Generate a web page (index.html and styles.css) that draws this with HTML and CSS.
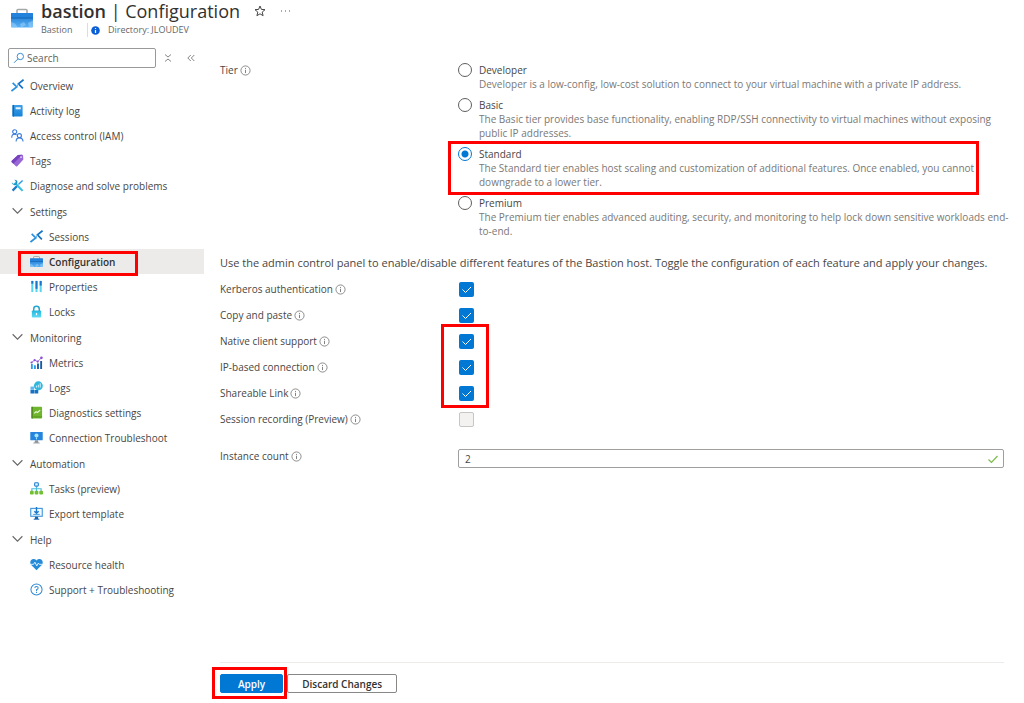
FILE: index.html
```html
<!DOCTYPE html>
<html lang="en">
<head>
<meta charset="utf-8">
<title>bastion | Configuration</title>
<link rel="stylesheet" href="styles.css">
</head>
<body>

<!-- shared icons -->
<svg class="iconDefs" aria-hidden="true">
  <defs>
    <linearGradient id="blueFade" x1="0" y1="0" x2="0" y2="1">
      <stop offset="0" stop-color="#1673cf"/><stop offset="1" stop-color="#5ab2f5"/>
    </linearGradient>
    <linearGradient id="bookFade" x1="0" y1="0" x2="0" y2="1">
      <stop offset="0" stop-color="#3fa0e8"/><stop offset="1" stop-color="#1683d8"/>
    </linearGradient>
    <linearGradient id="lockFade" x1="0" y1="0" x2="0" y2="1">
      <stop offset="0" stop-color="#22b5dd"/><stop offset="1" stop-color="#5fdcf4"/>
    </linearGradient>
  </defs>
  <symbol id="info" viewBox="0 0 12 12">
    <circle cx="6" cy="6" r="5" fill="none" stroke="#777" stroke-width=".9"/>
    <path d="M6 5.2v3.6M6 3.2v1.1" stroke="#777" stroke-width="1"/>
  </symbol>
  <symbol id="chevron" viewBox="0 0 12 12">
    <path d="M1.500 3L6 7.500 10.500 3" fill="none" stroke="#666" stroke-width="1"/>
  </symbol>
  <symbol id="bastion" viewBox="0 0 14 14">
    <path d="M.5 13L6.200 8.600 1.800 4.200" fill="none" stroke="#2a8fdd" stroke-width="1.800"/>
    <path d="M13.500 .8L8 5.200l4.800 4.800" fill="none" stroke="#1572c4" stroke-width="1.800"/>
    <path d="M6.200 8.600L8 5.200" stroke="#3fa9ee" stroke-width="1"/>
  </symbol>
  <symbol id="toolbox" viewBox="0 0 22 20">
    <path d="M6 6V2.500q0-1 1-1h8q1 0 1 1V6" fill="none" stroke="#a5a8ab" stroke-width="1.600"/>
    <rect x="0" y="5" width="22" height="14.500" rx="1" fill="url(#blueFade)"/>
    <rect x="0" y="5" width="22" height="4.500" rx="1" fill="#2383dc"/>
    <path d="M0 9.500h22v1H0z" fill="#1262b3"/>
    <path d="M0 14l4 1.500 3 4H1q-1 0-1-1zM22 12.500l-5 2.500 1 4.500h3q1 0 1-1zM9 16l4-2 2 3-5 2.500z" fill="#a4d5fa" opacity=".5"/>
  </symbol>
</svg>

<header class="pageHeader">
  <svg class="resourceIcon"><use href="#toolbox"/></svg>
  <div>
    <div class="titleRow">
      <h1 class="pageTitle"><strong>bastion</strong> | Configuration</h1>
      <button type="button" class="plainButton starButton" aria-label="Favorite">
        <svg class="icon12" viewBox="0 0 12 12"><path d="M6 1l1.400 3.400 3.600.3-2.800 2.400.9 3.600L6 8.800l-3.100 1.900.9-3.600L1 4.700l3.600-.3z" fill="none" stroke="#444" stroke-width="1"/></svg>
      </button>
      <button type="button" class="plainButton moreButton" aria-label="More">
        <svg class="icon12" viewBox="0 0 12 12"><path d="M2 6h1M6 6h1M10 6h1" stroke="#555" stroke-width="1"/></svg>
      </button>
    </div>
    <div class="subRow">
      <span class="resourceType">Bastion</span>
      <svg class="icon9" viewBox="0 0 9 9"><circle cx="4.500" cy="4.500" r="4.300" fill="#0a5fd8"/><path d="M4.500 4v3M4.500 1.900v1.200" stroke="#fff" stroke-width="1.200"/></svg>
      <span>Directory: JLOUDEV</span>
    </div>
  </div>
</header>

<div class="blade">
  <nav class="sideNav">
    <div class="searchRow">
      <label class="searchBox">
        <svg class="icon12" viewBox="0 0 12 12"><circle cx="7.300" cy="4.500" r="3.200" fill="none" stroke="#3a8fd6" stroke-width="1"/><path d="M5 6.800L1 10.800" stroke="#3a8fd6" stroke-width="1"/></svg>
        <input type="text" class="searchInput" placeholder="Search" aria-label="Search">
      </label>
      <button type="button" class="plainButton" aria-label="Collapse all">
        <svg class="icon10" viewBox="0 0 10 10"><path d="M2 1.500l3 2.500 3-2.500M2 8.500L5 6l3 2.500" fill="none" stroke="#777" stroke-width=".9"/></svg>
      </button>
      <button type="button" class="plainButton collapseButton" aria-label="Hide menu">
        <svg class="icon10" viewBox="0 0 10 10"><path d="M4.800 2l-3 3 3 3M8.300 2l-3 3 3 3" fill="none" stroke="#777" stroke-width=".9"/></svg>
      </button>
    </div>

    <ul class="navList">
      <li><a href="#" class="navItem"><svg class="navIcon"><use href="#bastion"/></svg>Overview</a></li>
      <li><a href="#" class="navItem">
        <svg class="navIcon" viewBox="0 0 14 14"><rect x="1.500" y="1" width="11" height="12.500" rx="1" fill="url(#bookFade)"/><path d="M2.500 1v12.500" stroke="#1069b4" stroke-width="1.600"/><rect x="5" y="3.500" width="5.500" height="2.200" fill="#e8f5ff"/></svg>Activity log</a></li>
      <li><a href="#" class="navItem">
        <svg class="navIcon" viewBox="0 0 14 14" fill="none" stroke="#3b7ddd" stroke-width="1.200"><circle cx="4" cy="3" r="2.200"/><path d="M.8 9.500C.8 6.500 2 5.500 4 5.500q1.300 0 2 .7"/><circle cx="9" cy="7.200" r="2.200"/><path d="M5.500 13.500c0-2.700 1.300-4 3.500-4s3.800 1.300 4 4"/></svg>Access control (IAM)</a></li>
      <li><a href="#" class="navItem">
        <svg class="navIcon" viewBox="0 0 14 14"><path d="M7.500 1.200L12 .8q1 0 1 1l.3 4-6.600 7.400q-.7.700-1.400 0L.8 8.800q-.7-.7 0-1.400z" fill="#9a67d6"/><path d="M7.500 1.200L12 .8 2.500 10.500.8 8.800q-.7-.7 0-1.400z" fill="#7742bd"/><circle cx="10.800" cy="3.300" r="1" fill="#e9ddf8"/></svg>Tags</a></li>
      <li><a href="#" class="navItem">
        <svg class="navIcon" viewBox="0 0 14 14"><path d="M12.500 1.500L8 6" stroke="#2a9be0" stroke-width="1.500"/><path d="M6.500 7.500l-4.800 5" stroke="#1a7bc8" stroke-width="2.400"/><path d="M4 4l8.500 8.800" stroke="#32bede" stroke-width="2.200"/><path d="M.8 3.500L2.500 5l2.400-.1.200-2.400L3.600.9q2.800-.3 3.300 1.800.3 3.800-3.300 4Q1 6.300.8 3.500z" fill="#1795c9"/></svg>Diagnose and solve problems</a></li>
    </ul>

    <button type="button" class="navItem navHeading"><svg class="navIcon"><use href="#chevron"/></svg>Settings</button>
    <ul class="navList navSub">
      <li><a href="#" class="navItem"><svg class="navIcon"><use href="#bastion"/></svg>Sessions</a></li>
      <li><a href="#" class="navItem navActive" aria-current="page"><svg class="navIcon"><use href="#toolbox"/></svg>Configuration</a></li>
      <li><a href="#" class="navItem">
        <svg class="navIcon" viewBox="0 0 14 14" stroke-width="2.200"><path d="M2.500 1v12" stroke="#58d5f0"/><path d="M2.500 1v3" stroke="#1778c9"/><path d="M7 1v12" stroke="#58d5f0"/><path d="M7 1v8.500" stroke="#1778c9"/><path d="M11.500 1v12" stroke="#58d5f0"/><path d="M11.500 1v5" stroke="#1778c9"/></svg>Properties</a></li>
      <li><a href="#" class="navItem">
        <svg class="navIcon" viewBox="0 0 14 14"><path d="M4 7V4.200Q4 1.300 7 1.300t3 2.900V7" fill="none" stroke="#25a5cb" stroke-width="1.600"/><rect x="2" y="5.800" width="10" height="7.700" rx="1" fill="url(#lockFade)"/><path d="M7 8.500v2.500" stroke="#fff" stroke-width="1.400"/></svg>Locks</a></li>
    </ul>

    <button type="button" class="navItem navHeading"><svg class="navIcon"><use href="#chevron"/></svg>Monitoring</button>
    <ul class="navList navSub">
      <li><a href="#" class="navItem">
        <svg class="navIcon" viewBox="0 0 14 14"><path d="M1 8.500h2V14H1zM4.300 10h2v4h-2z" fill="#2d9bea"/><path d="M7.600 8h2v6h-2zM11 5.500h2V14h-2z" fill="#185a9e"/><path d="M1.500 7l3.500-2.500L8.300 6l4-4" fill="none" stroke="#a06be0" stroke-width="1"/><g fill="#8a4fd4"><circle cx="1.700" cy="7" r="1.200"/><circle cx="5" cy="4.500" r="1.200"/><circle cx="8.300" cy="6" r="1.200"/><circle cx="12.300" cy="2" r="1.400"/></g></svg>Metrics</a></li>
      <li><a href="#" class="navItem">
        <svg class="navIcon" viewBox="0 0 14 14"><path d="M.5 6h4v3.500h-4z" fill="#5fb6f3"/><path d="M.5 9.800h4v3.700h-4zM4.900 9.800h4v3.700h-4z" fill="#1571c2"/><circle cx="9" cy="5.200" r="4.800" fill="#31b6dc"/><path d="M6.900 7V5M9 7V4M11 7V2.500" stroke="#e3f8ff" stroke-width="1"/></svg>Logs</a></li>
      <li><a href="#" class="navItem">
        <svg class="navIcon" viewBox="0 0 14 14"><rect x="1.500" y=".8" width="11.500" height="12.700" rx="1" fill="#70b52e"/><path d="M2.300.8v12.700" stroke="#4c871d" stroke-width="1.500"/><path d="M3.500 11.800H13" stroke="#559420" stroke-width="1"/><path d="M4.500 8l2-1.800 1.500.8 3-2.500" fill="none" stroke="#e8f8d6" stroke-width="1.200"/></svg>Diagnostics settings</a></li>
      <li><a href="#" class="navItem">
        <svg class="navIcon" viewBox="0 0 14 14"><rect x=".3" y="1" width="13.400" height="9" rx=".7" fill="#2584dd"/><path d="M5.500 10h3l.8 3H4.700z" fill="#8c9298"/><path d="M3.500 13h7" stroke="#a5aaae" stroke-width="1"/><circle cx="7" cy="4.800" r="2.200" fill="#a5e5fa"/><path d="M7 7v2" stroke="#a5e5fa" stroke-width="1.200"/></svg>Connection Troubleshoot</a></li>
    </ul>

    <button type="button" class="navItem navHeading"><svg class="navIcon"><use href="#chevron"/></svg>Automation</button>
    <ul class="navList navSub">
      <li><a href="#" class="navItem">
        <svg class="navIcon" viewBox="0 0 14 14"><path d="M7 4.500v6M2 10.500V7.300h10v3.200" fill="none" stroke="#49bedd" stroke-width="1.200"/><rect x="5" y=".8" width="4" height="3.700" rx="1" fill="#e5f4ff" stroke="#2482d0" stroke-width="1.200"/><g fill="#73c032"><rect x="0" y="9.500" width="4" height="4" rx="1"/><rect x="5" y="9.500" width="4" height="4" rx="1"/><rect x="10" y="9.500" width="4" height="4" rx="1"/></g></svg>Tasks (preview)</a></li>
      <li><a href="#" class="navItem">
        <svg class="navIcon" viewBox="0 0 14 14"><rect x=".8" y="1.500" width="12.400" height="8.500" fill="#f3faff" stroke="#4297dc" stroke-width="1.200"/><path d="M7 0v6.500M4.700 4.500L7 6.800l2.300-2.300" fill="none" stroke="#1b79cd" stroke-width="1.500"/><path d="M3.500 8h7" stroke="#4297dc" stroke-width="1"/><path d="M5.500 10.500h3l.5 2.500H5z" fill="#1764ab"/><path d="M4 13.200h6" stroke="#1764ab" stroke-width="1"/></svg>Export template</a></li>
    </ul>

    <button type="button" class="navItem navHeading"><svg class="navIcon"><use href="#chevron"/></svg>Help</button>
    <ul class="navList navSub">
      <li><a href="#" class="navItem">
        <svg class="navIcon" viewBox="0 0 14 14"><path d="M7 13.200L1.300 7.500C-1 4.500 1 1.200 3.800 1.200q2 0 3.200 1.600Q8.200 1.200 10.200 1.200c2.800 0 4.800 3.300 2.500 6.300z" fill="#258bd9"/><path d="M1 6.800h2.800L5.300 4.500l2 4 1.700-3 1 1.300h3" fill="none" stroke="#e5f5ff" stroke-width="1"/></svg>Resource health</a></li>
      <li><a href="#" class="navItem">
        <svg class="navIcon" viewBox="0 0 14 14"><circle cx="7" cy="7" r="6" fill="#fff" stroke="#2f8ad5" stroke-width="1.100"/><path d="M5.200 5.500q0-1.800 1.800-1.800t1.800 1.600Q8.800 6.300 7 7.300V8.500M7 9.500v1.200" fill="none" stroke="#2f8ad5" stroke-width="1.100"/></svg>Support + Troubleshooting</a></li>
    </ul>
  </nav>

  <main class="content">
    <form class="configForm">
      <div class="formRow" role="radiogroup" aria-labelledby="tierLabel">
        <div class="fieldLabel" id="tierLabel">Tier <svg class="infoIcon"><use href="#info"/></svg></div>
        <div class="tierList">
          <div class="tierOption">
            <input type="radio" class="tierRadio" name="tier" id="tierDeveloper">
            <label for="tierDeveloper">Developer<span class="tierText">Developer is a low-config, low-cost solution to connect to your virtual machine with a private IP address.</span></label>
          </div>
          <div class="tierOption">
            <input type="radio" class="tierRadio" name="tier" id="tierBasic">
            <label for="tierBasic">Basic<span class="tierText">The Basic tier provides base functionality, enabling RDP/SSH connectivity to virtual machines without exposing public IP addresses.</span></label>
          </div>
          <div class="tierOption marked markedTier">
            <input type="radio" class="tierRadio" name="tier" id="tierStandard" checked>
            <label for="tierStandard">Standard<span class="tierText">The Standard tier enables host scaling and customization of additional features. Once enabled, you cannot downgrade to a lower tier.</span></label>
          </div>
          <div class="tierOption">
            <input type="radio" class="tierRadio" name="tier" id="tierPremium">
            <label for="tierPremium">Premium<span class="tierText">The Premium tier enables advanced auditing, security, and monitoring to help lock down sensitive workloads end-to-end.</span></label>
          </div>
        </div>
      </div>

      <p class="introText">Use the admin control panel to enable/disable different features of the Bastion host. Toggle the configuration of each feature and apply your changes.</p>

      <div class="formRow featureRow">
        <label class="fieldLabel" for="kerberos">Kerberos authentication <svg class="infoIcon"><use href="#info"/></svg></label>
        <input type="checkbox" class="featureCheck" id="kerberos" checked>
      </div>
      <div class="formRow featureRow">
        <label class="fieldLabel" for="copyPaste">Copy and paste <svg class="infoIcon"><use href="#info"/></svg></label>
        <input type="checkbox" class="featureCheck" id="copyPaste" checked>
      </div>
      <div class="marked markedFeatures">
        <div class="formRow featureRow">
          <label class="fieldLabel" for="nativeClient">Native client support <svg class="infoIcon"><use href="#info"/></svg></label>
          <input type="checkbox" class="featureCheck" id="nativeClient" checked>
        </div>
        <div class="formRow featureRow">
          <label class="fieldLabel" for="ipBased">IP-based connection <svg class="infoIcon"><use href="#info"/></svg></label>
          <input type="checkbox" class="featureCheck" id="ipBased" checked>
        </div>
        <div class="formRow featureRow">
          <label class="fieldLabel" for="shareable">Shareable Link <svg class="infoIcon"><use href="#info"/></svg></label>
          <input type="checkbox" class="featureCheck" id="shareable" checked>
        </div>
      </div>
      <div class="formRow featureRow">
        <label class="fieldLabel" for="recording">Session recording (Preview) <svg class="infoIcon"><use href="#info"/></svg></label>
        <input type="checkbox" class="featureCheck" id="recording" disabled>
      </div>

      <div class="formRow countRow">
        <label class="fieldLabel" for="instanceCount">Instance count <svg class="infoIcon"><use href="#info"/></svg></label>
        <div class="countBox">
          <input type="text" class="countInput" id="instanceCount" value="2">
          <svg class="icon12" viewBox="0 0 12 12"><path d="M1.500 6.500l3 3 6-6.500" fill="none" stroke="#7dbb4c" stroke-width="1.200"/></svg>
        </div>
      </div>

      <div class="formFooter">
        <span class="marked markedApply"><button type="button" class="formButton applyButton">Apply</button></span>
        <button type="button" class="formButton">Discard Changes</button>
      </div>
    </form>
  </main>
</div>

</body>
</html>
```

FILE: styles.css
```css
*, *::after {
	box-sizing: border-box;
}

body {
	margin: 0;
	min-height: 100vh;
	display: flex;
	flex-direction: column;
	background: #fff;
	color: #484644;
	font-family: "Open Sans", "Noto Sans", sans-serif;
	font-size: 10px;
	line-height: 14px;
}

button, input {
	font: inherit;
	color: inherit;
}

.iconDefs {
	position: absolute;
	width: 0;
	height: 0;
}

.icon9 {
	width: 9px;
	height: 9px;
}

.icon10 {
	width: 10px;
	height: 10px;
}

.icon12 {
	width: 12px;
	height: 12px;
}

.plainButton {
	display: flex;
	padding: 0;
	border: 0;
	background: none;
}

/* header */

.pageHeader {
	display: flex;
	gap: 8px;
	height: 44px;
	padding-left: 11px;
}

.resourceIcon {
	width: 22px;
	height: 20px;
	margin-top: 8px;
}

.titleRow {
	display: flex;
	align-items: center;
	height: 22px;
}

.pageTitle {
	margin: 0;
	font-size: 18px;
	font-weight: 400;
	line-height: 20px;
	color: #323130;
}

.pageTitle strong {
	font-weight: 600;
}

.starButton {
	margin-left: 14px;
}

.moreButton {
	margin-left: 13px;
}

.subRow {
	display: flex;
	align-items: center;
	height: 16px;
	font-size: 9px;
	color: #666;
}

.resourceType {
	width: 47px;
	margin-right: 3px;
	border-right: 1px solid #ddd;
}

.subRow .icon9 {
	margin-right: 8px;
}

/* side menu */

.blade {
	display: flex;
	flex: 1;
}

.sideNav {
	flex: none;
	width: 204px;
}

.searchRow {
	display: flex;
	align-items: center;
	height: 20px;
	margin: 4px 8px 5px;
}

.searchBox {
	display: flex;
	align-items: center;
	width: 148px;
	height: 20px;
	margin-right: 7px;
	padding: 0 4px;
	border: 1px solid #999;
	border-radius: 2px;
}

.searchInput {
	flex: 1;
	min-width: 0;
	padding: 0 2px;
	border: 0;
	outline: 0;
}

.searchInput::placeholder {
	color: #605e5c;
}

.collapseButton {
	margin-left: 13px;
}

.navList {
	margin: 0;
	padding: 0;
	list-style: none;
}

.navItem {
	display: flex;
	align-items: center;
	gap: 6px;
	width: 100%;
	height: 25px;
	padding: 0 0 0 11px;
	border: 0;
	background: none;
	color: #484644;
	text-decoration: none;
}

.navHeading {
	margin-top: 1px;
}

.navSub .navItem {
	padding-left: 30px;
}

.navIcon {
	flex: none;
	width: 13px;
	height: 13px;
}

.navSub .navActive {
	position: relative;
	background: #edebe9;
	color: #323130;
	font-weight: 600;
}

/* red call-out frames */

.marked {
	position: relative;
}

.marked::after,
.navActive::after {
	content: "";
	position: absolute;
	border: 3px solid #f00;
	pointer-events: none;
}

.navActive::after {
	left: 18px;
	top: 2px;
	width: 120px;
	height: 25px;
}

.markedTier::after {
	left: -10px;
	right: 33px;
	top: -6px;
	bottom: -6px;
}

.markedFeatures::after {
	left: 221px;
	width: 48px;
	top: -4px;
	bottom: -2px;
}

.markedApply::after {
	left: -8px;
	right: -4px;
	top: -7px;
	bottom: -6px;
}

/* settings form */

.content {
	flex: 1;
	min-width: 0;
	display: flex;
	padding: 19px 20px 10px 16px;
}

.configForm {
	flex: 1;
	min-width: 0;
	display: flex;
	flex-direction: column;
}

.formRow {
	display: flex;
}

.fieldLabel {
	flex: none;
	display: flex;
	align-items: center;
	gap: 2px;
	width: 238px;
	height: 14px;
}

.infoIcon {
	width: 11px;
	height: 11px;
}

.tierList {
	flex: 1;
	display: flex;
	flex-direction: column;
	gap: 7px;
	margin-right: -8px;
}

.tierOption {
	display: flex;
	gap: 7px;
}

.tierRadio {
	flex: none;
	appearance: none;
	width: 14px;
	height: 14px;
	margin: 0;
	border: 1px solid #605e5c;
	border-radius: 50%;
}

.tierRadio:checked {
	border-color: #0078d4;
	background: radial-gradient(circle, #0078d4 3px, #fff 4px);
}

.tierText {
	display: block;
	color: #7a7876;
}

.introText {
	margin: 17px 0 5px;
	font-size: 11px;
	line-height: 16px;
}

.featureRow {
	align-items: center;
	height: 26px;
}

.featureCheck {
	appearance: none;
	width: 15px;
	height: 15px;
	margin: 0 0 0 1px;
	border-radius: 2px;
}

.featureCheck:checked {
	background: #0078d4 url("data:image/svg+xml,%3Csvg xmlns='http://www.w3.org/2000/svg' viewBox='0 0 15 15'%3E%3Cpath d='M3.500 7.500l3 3 5.500-5.500' fill='none' stroke='white'/%3E%3C/svg%3E");
}

.featureCheck:disabled {
	border: 1px solid #c8c6c4;
	background: #f3f2f1;
}

.countRow {
	margin-top: 17px;
}

.countBox {
	flex: 1;
	display: flex;
	align-items: center;
	height: 19px;
	padding: 0 4px;
	border: 1px solid #a19f9d;
	border-radius: 2px;
}

.countInput {
	flex: 1;
	min-width: 0;
	padding: 0 2px;
	border: 0;
	outline: 0;
}

.formFooter {
	display: flex;
	gap: 4px;
	margin-top: auto;
	padding-top: 11px;
	border-top: 1px solid #edebe9;
}

.markedApply {
	display: flex;
}

.formButton {
	height: 19px;
	padding: 0 14px;
	border: 1px solid #8a8886;
	border-radius: 2px;
	background: #fff;
	color: #323130;
	font-weight: 600;
	line-height: 16px;
}

.applyButton {
	padding: 0 17px;
	border-color: #0078d4;
	background: #0078d4;
	color: #fff;
}
```
